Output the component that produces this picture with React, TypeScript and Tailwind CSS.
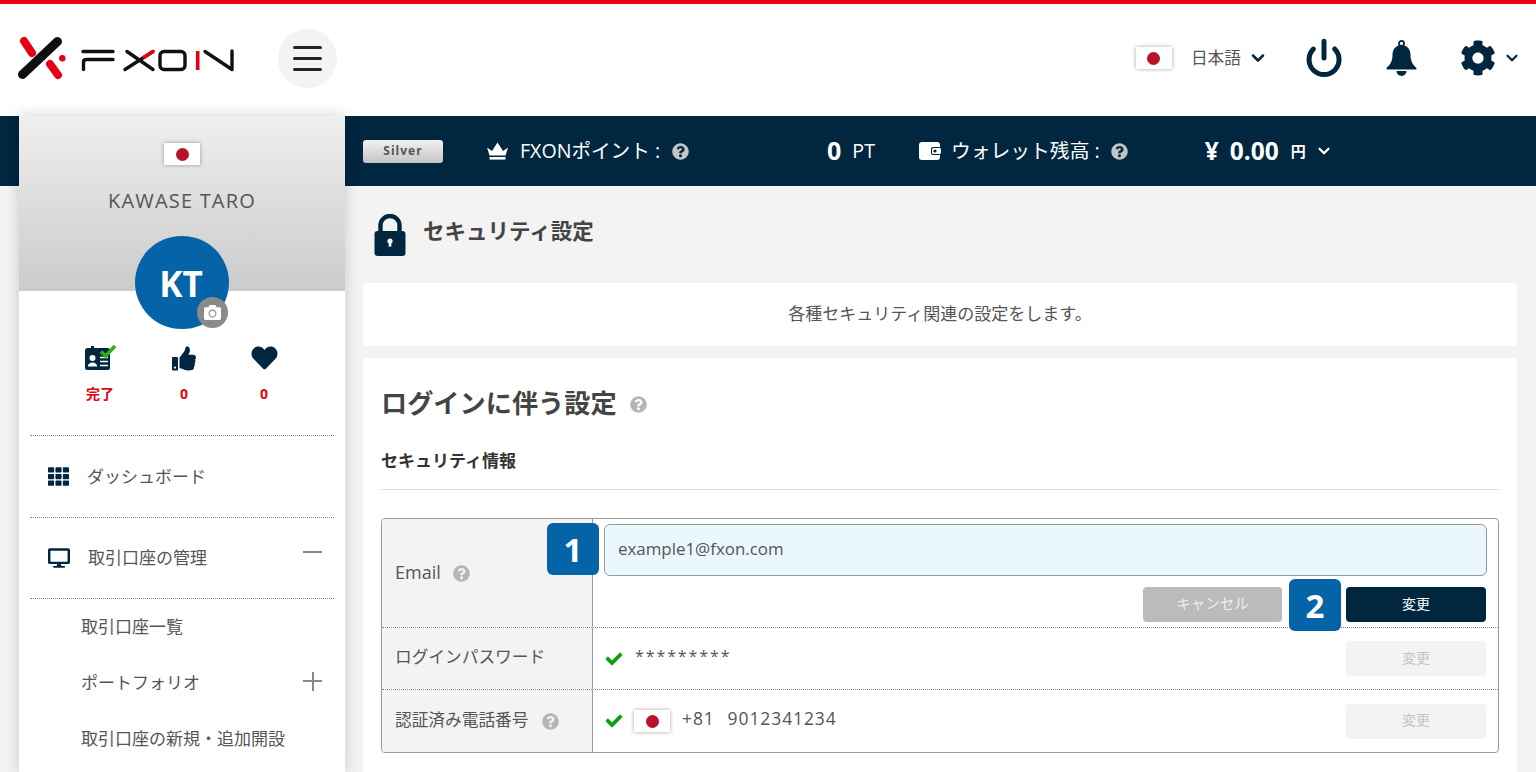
import React from "react";
import { Power, ChevronDown } from "lucide-react";
import { FaCog, FaQuestionCircle, FaThumbsUp, FaHeart, FaTh, FaDesktop, FaCheck, FaCamera } from "react-icons/fa";

const Flag = ({ className = "" }: { className?: string }) => (
  <span className={`inline-flex items-center justify-center bg-white shadow-[0_0_4px_rgba(0,0,0,0.35)] ${className}`}>
    <span className="w-[13px] h-[13px] rounded-full bg-[#b7122a]" />
  </span>
);

const Logo = () => (
  <svg width="220" height="46" viewBox="0 0 220 46" fill="none" strokeLinecap="round" strokeLinejoin="round">
    <path d="M7 7 L15 19" stroke="#e50012" strokeWidth="8" />
    <path d="M40.5 7.5 L5.5 40.5" stroke="#0f0f0f" strokeWidth="9" />
    <path d="M33 30 L41 41" stroke="#e50012" strokeWidth="8" />
    <circle cx="45.3" cy="24.3" r="3.2" fill="#e50012" />
    <g stroke="#111" strokeWidth="3.4">
      <path d="M66 17.5 H96" />
      <path d="M96 25.5 H69.5 Q66.5 25.5 66.5 28 V35.5" />
      <path d="M108 35.5 L136 17.5" />
      <path d="M110 17.5 L136 35.5" />
      <rect x="143" y="17.5" width="25" height="18" rx="4" />
      <path d="M188 17.5 L215 35.5 V17" />
    </g>
    <path d="M127 23.2 L136 17.5" stroke="#e50012" strokeWidth="3.4" />
    <path d="M180.7 17 V36" stroke="#e50012" strokeWidth="3.6" strokeLinecap="butt" />
  </svg>
);

const Bell = () => (
  <svg width="31" height="36" viewBox="0 0 31 36" fill="#002640" className="ml-[42px]">
    <circle cx="15.5" cy="3.4" r="2.5" fill="none" stroke="#002640" strokeWidth="1.8" />
    <path d="M15.5 5 C9 5.5 6.5 10 6.5 15 C6.5 22 3.5 25 0.6 28 Q0 29.6 1.5 29.6 H29.5 Q31 29.6 30.4 28 C27.5 25 24.5 22 24.5 15 C24.5 10 22 5.5 15.5 5 Z" />
    <path d="M10.5 31 H20.5 A5 5 0 0 1 10.5 31 Z" />
  </svg>
);

const Lock = () => (
  <svg width="32" height="42" viewBox="0 0 32 42">
    <path d="M6.5 20 V11.5 a9.5 9.5 0 0 1 19 0 V20" fill="none" stroke="#002640" strokeWidth="4.4" />
    <rect x="0.5" y="17" width="31" height="25" rx="3" fill="#002640" />
    <circle cx="16" cy="27" r="2.6" fill="#fff" />
    <path d="M15 28 h2 l.5 4.5 h-3 z" fill="#fff" />
  </svg>
);

const Crown = () => (
  <svg width="23" height="19" viewBox="0 0 23 19" fill="#fff">
    <path d="M1 5.5 L6 9 L11.5 0.5 L17 9 L22 5.5 L19.5 13.5 H3.5 Z" />
    <rect x="3.5" y="15" width="16" height="2.6" />
  </svg>
);

const Wallet = () => (
  <svg width="22" height="18" viewBox="0 0 22 18">
    <rect x="0" y="0" width="21" height="18" rx="3" fill="#fff" />
    <rect x="12" y="5" width="10" height="8" rx="2" fill="#002640" />
    <rect x="13" y="6" width="9" height="6" rx="1.5" fill="#fff" />
    <circle cx="16" cy="9" r="1.6" fill="#002640" />
  </svg>
);

const IdCard = () => (
  <svg width="34" height="30" viewBox="0 0 34 30">
    <rect x="2" y="5" width="25" height="22" rx="2.5" fill="#002640" />
    <rect x="8" y="3" width="3" height="4" fill="#002640" />
    <circle cx="9.5" cy="15" r="3" fill="#fff" />
    <path d="M4.8 23.5 a4.7 4 0 0 1 9.4 0 z" fill="#fff" />
    <path d="M17 14.5 h8 M17 18.5 h8 M17 22.5 h8" stroke="#fff" strokeWidth="1.4" />
    <path d="M18 8.5 L22.6 13 L32 3" fill="none" stroke="#2fae12" strokeWidth="3.6" />
  </svg>
);

const Help = ({ className }: { className: string }) => <FaQuestionCircle className={className} />;

const Badge = ({ n, className }: { n: string; className: string }) => (
  <span className={`absolute z-10 w-[52px] h-[52px] rounded-[6px] bg-[#0564a8] text-white font-bold text-[33px] flex items-center justify-center leading-none ${className}`}>
    {n}
  </span>
);

const Stat = ({ icon, label, className }: { icon: React.ReactNode; label: string; className: string }) => (
  <div className={`flex flex-col items-center ${className}`}>
    <div className="h-[30px] flex items-center justify-center">{icon}</div>
    <span className="mt-[12px] text-[14px] font-bold text-[#e50012] leading-[18px]">{label}</span>
  </div>
);

const Dotted = () => <div className="mx-[11px] border-t border-dotted border-[#888]" />;

const SubItem = ({ label, plus }: { label: string; plus?: boolean }) => (
  <div className="h-[56px] pl-[62px] pr-[23px] flex items-center justify-between text-[17px] text-[#555]">
    <span>{label}</span>
    {plus && (
      <span className="relative w-[19px] h-[19px] -mt-[4px]">
        <span className="absolute left-0 right-0 top-[8px] h-[2px] bg-[#888]" />
        <span className="absolute top-0 bottom-0 left-[8.5px] w-[2px] bg-[#888]" />
      </span>
    )}
  </div>
);

const DisabledBtn = () => (
  <button className="w-[140px] h-[35px] rounded-[4px] bg-[#f3f3f3] text-[#c4c4c4] text-[14px] pb-[3px]">変更</button>
);

export default function App() {
  return (
    <div className="w-[1536px] h-[772px] overflow-hidden flex flex-col bg-[#f3f3f3] text-[#555] [font-family:'Open_Sans','Noto_Sans_CJK_JP',sans-serif]">
      <header className="h-[116px] shrink-0 bg-white border-t-4 border-[#e50012] flex items-center pl-[17px] pr-[15px]">
        <div className="-mt-[6px]"><Logo /></div>
        <button className="ml-[41px] -mt-[3px] w-[59px] h-[59px] rounded-full bg-[#f3f3f3] flex flex-col items-center justify-center gap-[8px]">
          <span className="w-[29px] h-[3px] rounded bg-[#222]" />
          <span className="w-[29px] h-[3px] rounded bg-[#222]" />
          <span className="w-[29px] h-[3px] rounded bg-[#222]" />
        </button>
        <div className="ml-auto flex items-center -mt-[4px]">
          <Flag className="w-[36px] h-[22px]" />
          <span className="ml-[19px] text-[16.7px] text-[#555]">日本語</span>
          <ChevronDown className="ml-[7px] w-[20px] h-[20px] text-[#002640]" strokeWidth={3} />
          <Power className="ml-[36px] w-[40px] h-[40px] text-[#002640]" strokeWidth={3} />
          <Bell />
          <FaCog className="ml-[43px] w-[36px] h-[36px] text-[#002640]" />
          <ChevronDown className="ml-[7px] w-[18px] h-[18px] text-[#002640]" strokeWidth={3} />
        </div>
      </header>
      <div className="flex-1 flex min-h-0">
        <div className="w-[19px] shrink-0"><div className="h-[70px] bg-[#002640]" /></div>
        <aside className="w-[326px] shrink-0 bg-white shadow-[0_0_14px_rgba(0,0,0,0.18)] z-10">
          <div className="relative h-[175px] bg-gradient-to-b from-[#efefef] to-[#cbcbcb] flex flex-col items-center">
            <Flag className="mt-[27px] w-[36px] h-[22px]" />
            <div className="mt-[21px] text-[20px] leading-[30px] tracking-[1.2px] text-[#555]">KAWASE TARO</div>
            <div className="absolute left-[116px] top-[120px] w-[94px] h-[93px] rounded-full bg-[#0564a8] text-white font-bold text-[35px] flex items-center justify-center pt-[3px] pr-[2px]">
              KT
              <span className="absolute right-[1px] bottom-[1px] w-[31px] h-[31px] rounded-full bg-[#8a8a8a] flex items-center justify-center">
                <FaCamera className="w-[17px] h-[17px] text-white" />
              </span>
            </div>
          </div>
          <div className="relative h-[144px]">
            <Stat className="absolute left-[61px] top-[52px] w-[40px]" icon={<IdCard />} label="完了" />
            <Stat className="absolute left-[145px] top-[52px] w-[40px]" icon={<FaThumbsUp className="w-[24px] h-[25px] text-[#002640]" />} label="0" />
            <Stat className="absolute left-[225px] top-[52px] w-[40px]" icon={<FaHeart className="w-[29px] h-[26px] text-[#002640]" />} label="0" />
          </div>
          <Dotted />
          <div className="h-[81px] pl-[29px] flex items-center text-[17px]">
            <FaTh className="w-[21px] h-[21px] text-[#002640]" />
            <span className="ml-[18px]">ダッシュボード</span>
          </div>
          <Dotted />
          <div className="h-[80px] pl-[29px] pr-[23px] flex items-center text-[17px]">
            <FaDesktop className="w-[22px] h-[22px] text-[#002640]" />
            <span className="ml-[18px]">取引口座の管理</span>
            <span className="ml-auto -mt-[13px] w-[19px] h-[2px] bg-[#888]" />
          </div>
          <Dotted />
          <SubItem label="取引口座一覧" />
          <SubItem label="ポートフォリオ" plus />
          <SubItem label="取引口座の新規・追加開設" />
        </aside>
        <main className="flex-1 min-w-0 flex flex-col">
          <div className="h-[70px] shrink-0 bg-[#002640] flex items-center pl-[18px] text-white">
            <span className="w-[80px] h-[23px] rounded-[3px] bg-gradient-to-b from-[#f2f2f2] to-[#c4c4c4] text-[#555] font-bold text-[12px] tracking-[1px] flex items-center justify-center">Silver</span>
            <span className="ml-[43px] flex"><Crown /></span>
            <span className="ml-[11px] text-[19.6px]">FXONポイント :</span>
            <Help className="ml-[12px] w-[17px] h-[17px] text-[#c4c4c4]" />
            <span className="ml-[138px] text-[25px] font-bold">0</span>
            <span className="ml-[11px] text-[19.6px]">PT</span>
            <span className="ml-[44px] flex"><Wallet /></span>
            <span className="ml-[10px] text-[19.8px]">ウォレット残高 :</span>
            <Help className="ml-[11px] w-[17px] h-[17px] text-[#c4c4c4]" />
            <span className="ml-[77px] text-[24.5px] font-bold">¥</span>
            <span className="ml-[11px] text-[24.5px] font-bold">0.00</span>
            <span className="ml-[12px] text-[15px] font-bold">円</span>
            <ChevronDown className="ml-[9px] w-[18px] h-[18px]" strokeWidth={3} />
          </div>
          <div className="pl-[18px] pr-[19px]">
            <div className="h-[97px] pl-[11px] flex items-center">
              <Lock />
              <span className="ml-[17px] -mt-[6px] text-[21.5px] font-bold text-[#444]">セキュリティ設定</span>
            </div>
            <div className="h-[63px] bg-white rounded-[4px] flex items-center justify-center text-[17px] pb-[2px]">
              各種セキュリティ関連の設定をします。
            </div>
            <div className="mt-[12px] bg-white rounded-[4px] h-[460px] px-[18px] pt-[27px]">
              <div className="flex items-center h-[38px]">
                <span className="text-[26.2px] font-bold text-[#444]">ログインに伴う設定</span>
                <Help className="ml-[13px] w-[17px] h-[17px] text-[#b5b5b5]" />
              </div>
              <div className="mt-[26px] text-[17px] font-bold text-[#333] leading-[24px]">セキュリティ情報</div>
              <div className="mt-[16px] border-t border-[#ddd]" />
              <div className="mt-[28px] border-[1.5px] border-[#999] rounded-[4px] overflow-hidden">
                <div className="flex h-[109px] border-b border-dotted border-[#888]">
                  <div className="w-[211px] shrink-0 bg-[#f3f3f3] border-r-[1.5px] border-[#999] pl-[13px] pt-[41px] flex items-start text-[18px] leading-[24px]">
                    <span>Email</span>
                    <Help className="ml-[12px] mt-[5px] w-[17px] h-[17px] text-[#b5b5b5]" />
                  </div>
                  <div className="relative flex-1 pl-[11px] pr-[11px] pt-[5px]">
                    <Badge n="1" className="left-[-46px] top-[4px]" />
                    <div className="h-[52px] rounded-[6px] border-[1.5px] border-[#999] bg-[#ebf7ff] pl-[13px] pb-[2px] flex items-center text-[16.9px]">example1@fxon.com</div>
                    <div className="mt-[11px] pr-[1px] flex justify-end gap-[64px]">
                      <button className="w-[139px] h-[35px] rounded-[4px] bg-[#bbb] text-[#eee] text-[14.5px] pb-[2px]">キャンセル</button>
                      <button className="w-[140px] h-[35px] rounded-[4px] bg-[#002640] text-white text-[14px] pb-[3px]">変更</button>
                    </div>
                    <Badge n="2" className="right-[157px] top-[60px]" />
                  </div>
                </div>
                <div className="flex h-[62px] border-b border-dotted border-[#888]">
                  <div className="w-[211px] shrink-0 bg-[#f3f3f3] border-r-[1.5px] border-[#999] pl-[13px] pb-[3px] flex items-center text-[16.7px]">ログインパスワード</div>
                  <div className="flex-1 pl-[12px] pr-[12px] flex items-center">
                    <FaCheck className="w-[18px] h-[16px] text-[#0aa012] stroke-current stroke-[30]" />
                    <span className="ml-[12px] -mt-[6px] text-[16px] tracking-[1.9px]">*********</span>
                    <span className="ml-auto"><DisabledBtn /></span>
                  </div>
                </div>
                <div className="flex h-[62px]">
                  <div className="w-[211px] shrink-0 bg-[#f3f3f3] border-r-[1.5px] border-[#999] pl-[13px] pb-[3px] flex items-center text-[16.7px]">
                    <span>認証済み電話番号</span>
                    <Help className="ml-[13px] mt-[3px] w-[17px] h-[17px] text-[#b5b5b5]" />
                  </div>
                  <div className="flex-1 pl-[12px] pr-[12px] flex items-center">
                    <FaCheck className="w-[18px] h-[16px] text-[#0aa012] stroke-current stroke-[30]" />
                    <Flag className="ml-[11px] w-[36px] h-[22px]" />
                    <span className="ml-[12px] -mt-[5px] text-[17.5px] tracking-[0.9px] [word-spacing:1px] whitespace-pre">+81  9012341234</span>
                    <span className="ml-auto"><DisabledBtn /></span>
                  </div>
                </div>
              </div>
            </div>
          </div>
        </main>
      </div>
    </div>
  );
}
